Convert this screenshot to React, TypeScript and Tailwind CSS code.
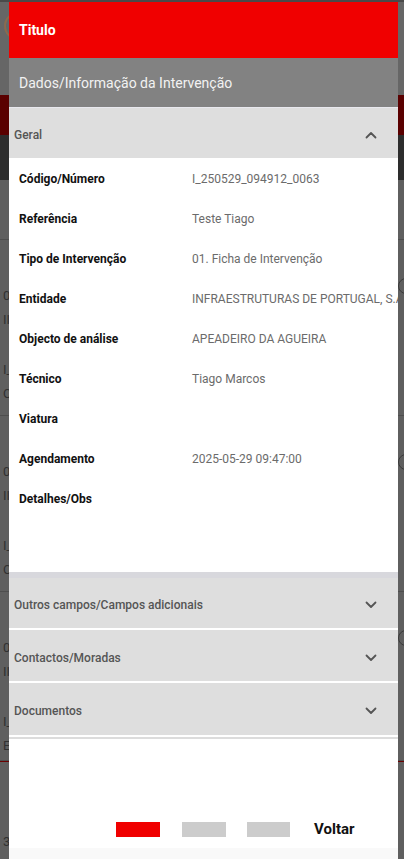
import React from 'react';

const FONT = { fontFamily: 'Roboto, "Liberation Sans", Arial, sans-serif' };

interface Field {
  label: string;
  value: string;
}

const fields: Field[] = [
  { label: 'Código/Número', value: 'I_250529_094912_0063' },
  { label: 'Referência', value: 'Teste Tiago' },
  { label: 'Tipo de Intervenção', value: '01. Ficha de Intervenção' },
  { label: 'Entidade', value: 'INFRAESTRUTURAS DE PORTUGAL, S.A' },
  { label: 'Objecto de análise', value: 'APEADEIRO DA AGUEIRA' },
  { label: 'Técnico', value: 'Tiago Marcos' },
  { label: 'Viatura', value: '' },
  { label: 'Agendamento', value: '2025-05-29 09:47:00' },
  { label: 'Detalhes/Obs', value: '' },
];

function Chevron({ up }: { up?: boolean }) {
  return (
    <svg width="12" height="8" viewBox="0 0 12 8" className="shrink-0">
      <path
        d={up ? 'M1.5 6.5 L6 2 L10.5 6.5' : 'M1.5 1.5 L6 6 L10.5 1.5'}
        fill="none"
        stroke="#555555"
        strokeWidth="1.8"
        strokeLinecap="round"
        strokeLinejoin="round"
      />
    </svg>
  );
}

function SectionHeader({ title, up, className }: { title: string; up?: boolean; className: string }) {
  return (
    <div className={`flex items-center justify-between bg-[#dedede] pl-[5px] pr-[21px] pt-[4px] ${className}`}>
      <span className="text-[12px] font-medium text-[#555555]">{title}</span>
      <Chevron up={up} />
    </div>
  );
}

// dimmed list behind the dialog, only its edges show
function BackgroundItem({ lines, height }: { lines: string[]; height: string }) {
  return (
    <div className={`${height} border-b border-[#4e4e4e] pt-[44px] pl-[3px] relative`}>
      <div className="text-[13px] leading-[24px] text-[#303030]">{lines[0]}</div>
      <div className="text-[13px] leading-[24px] text-[#303030]">{lines[1]}</div>
      <div className="h-[26px]" />
      <div className="text-[13px] leading-[24px] text-[#303030]">{lines[2]}</div>
      <div className="text-[13px] leading-[24px] text-[#303030]">{lines[3]}</div>
      <div className="absolute right-[-10px] top-[38px] w-[16px] h-[16px] rounded-full border border-[#3a3a3a]" />
    </div>
  );
}

export default function App() {
  return (
    <div className="relative w-[404px] h-[859px] overflow-hidden bg-[#5f5f5f]" style={FONT}>
      {/* Page behind */}
      <div className="flex flex-col">
        <div className="h-[95px] bg-[#666666] border-t-2 border-[#4a4a4a] pl-[4px] pt-[10px]">
          <div className="w-[28px] h-[28px] rounded-full border-2 border-[#8a6a50]" />
        </div>
        <div className="h-[40px] bg-[#5a0000]" />
        <div className="h-[45px] bg-[#2d2d2d]" />
        <div className="h-[60px] border-b border-[#4e4e4e]" />
        <BackgroundItem lines={['0', 'II', 'I_', 'C']} height="h-[176px]" />
        <BackgroundItem lines={['0', 'II', 'I_', 'C']} height="h-[176px]" />
        <BackgroundItem lines={['0', 'II', 'I_', 'E']} height="h-[169px]" />
        <div className="h-px bg-[#6a0000]" />
        <div className="pt-[70px] pl-[3px] text-[13px] text-[#303030]">3</div>
      </div>

      {/* Dialog */}
      <div className="absolute left-[9px] top-[2px] bottom-0 w-[389px] flex flex-col bg-white overflow-hidden">
        <div className="h-[56px] flex items-center px-[10px] bg-[#f00000]">
          <span className="text-[14px] font-bold text-white">Titulo</span>
        </div>
        <div className="h-[49px] flex items-center px-[10px] pt-[2px] bg-[#828282]">
          <span className="text-[14px] text-[#f2f2f2]">Dados/Informação da Intervenção</span>
        </div>
        <div className="h-px bg-[#e8e8ee]" />
        <SectionHeader title="Geral" up className="h-[50px]" />

        <div className="flex flex-col pb-[54px]">
          {fields.map((f) => (
            <div key={f.label} className="h-[40px] flex items-center px-[10px] pt-[2px] whitespace-nowrap">
              <span className="w-[173px] shrink-0 text-[12px] font-bold text-[#111111]">{f.label}</span>
              <span className="text-[12px] text-[#6b6b6b]">{f.value}</span>
            </div>
          ))}
        </div>

        <div className="h-[6px] bg-[#d8d8dd]" />
        <SectionHeader title="Outros campos/Campos adicionais" className="h-[50px]" />
        <div className="h-[2px] bg-white" />
        <SectionHeader title="Contactos/Moradas" className="h-[51px]" />
        <div className="h-[2px] bg-white" />
        <SectionHeader title="Documentos" className="h-[52px]" />
        <div className="h-[2px] bg-white" />
        <div className="h-[2px] bg-[#dcdcdc]" />

        <div className="flex-1" />

        {/* Footer buttons */}
        <div className="flex items-center h-[20px] pl-[107px] mb-[9px]">
          <div className="w-[44px] h-[15px] bg-[#f00000]" />
          <div className="w-[44px] h-[15px] bg-[#cccccc] ml-[22px]" />
          <div className="w-[43px] h-[15px] bg-[#cccccc] ml-[21px]" />
          <span className="ml-[24px] text-[15px] font-bold text-[#111111]">Voltar</span>
        </div>
        <div className="h-[11px] bg-[#f9f9f9]" />
      </div>
    </div>
  );
}
